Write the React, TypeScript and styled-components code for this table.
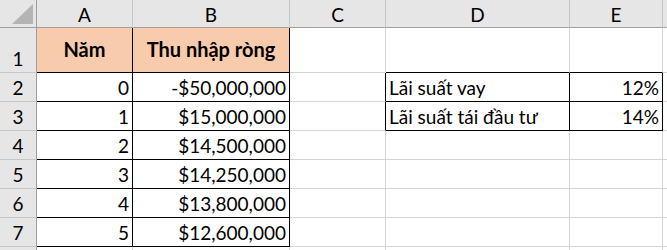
import React from 'react';
import styled, { createGlobalStyle } from 'styled-components';

const GRID = '#d4d4d4';
const BLACK = '#000000';

const Global = createGlobalStyle`
  body {
    margin: 0;
    background: #ffffff;
    overflow: hidden;
  }
`;

const Sheet = styled.div`
  display: grid;
  grid-template-columns: 37px 96px 157px 96px 184px 93px 4px;
  grid-template-rows: 28px 45px repeat(6, 29px) 10px;
  width: 667px;
  height: 250px;
  overflow: hidden;
  font-family: Lato, 'Liberation Sans', sans-serif;
  font-size: 19px;
  color: #000;
`;

const Corner = styled.div`
  background: #e6e6e6;
  border-right: 1px solid #9e9e9e;
  border-bottom: 1px solid #9e9e9e;
  position: relative;
  svg {
    position: absolute;
    right: 3px;
    bottom: 3px;
  }
`;

const ColHead = styled.div<{ $last?: boolean }>`
  background: #e6e6e6;
  border-right: 1px solid ${(p) => (p.$last ? '#e6e6e6' : '#c6c6c6')};
  border-bottom: 1px solid #9e9e9e;
  display: flex;
  align-items: center;
  justify-content: center;
  padding-top: 1px;
`;

const RowHead = styled.div`
  background: #e6e6e6;
  border-right: 1px solid #9e9e9e;
  border-bottom: 1px solid #c6c6c6;
  display: flex;
  align-items: flex-end;
  justify-content: center;
  padding-bottom: 2px;
  box-sizing: border-box;
`;

const Cell = styled.div<{
  $right: string;
  $bottom: string;
  $fill?: string;
  $align: 'left' | 'right' | 'center';
  $bold?: boolean;
  $middle?: boolean;
}>`
  background: ${(p) => p.$fill || '#ffffff'};
  border-right: 1px solid ${(p) => p.$right};
  border-bottom: 1px solid ${(p) => p.$bottom};
  display: flex;
  align-items: ${(p) => (p.$middle ? 'center' : 'flex-end')};
  justify-content: ${(p) =>
    p.$align === 'left' ? 'flex-start' : p.$align === 'right' ? 'flex-end' : 'center'};
  padding: 0 3px 2px 3px;
  font-weight: ${(p) => (p.$bold ? 700 : 400)};
  font-size: ${(p) => (p.$bold ? '20px' : '19px')};
  white-space: nowrap;
  overflow: visible;
  box-sizing: border-box;
`;

type CellData = {
  text?: string;
  align?: 'left' | 'right' | 'center';
  bold?: boolean;
  fill?: string;
  middle?: boolean;
};

const cols = ['A', 'B', 'C', 'D', 'E'];
const PEACH = '#f8cbad';

const money = ['-$50,000,000', '$15,000,000', '$14,500,000', '$14,250,000', '$13,800,000', '$12,600,000'];

// rows 1..8, columns A..E and a sliver of F
const rows: CellData[][] = [
  [
    { text: 'Năm', align: 'center', bold: true, fill: PEACH, middle: true },
    { text: 'Thu nhập ròng', align: 'center', bold: true, fill: PEACH, middle: true },
    {},
    {},
    {},
    {},
  ],
  ...money.map((m, i) => {
    const r: CellData[] = [
      { text: String(i), align: 'right' },
      { text: m, align: 'right' },
      {},
      {},
      {},
      {},
    ];
    if (i === 0) {
      r[3] = { text: 'Lãi suất vay', align: 'left' };
      r[4] = { text: '12%', align: 'right' };
    }
    if (i === 1) {
      r[3] = { text: 'Lãi suất tái đầu tư', align: 'left' };
      r[4] = { text: '14%', align: 'right' };
    }
    return r;
  }),
  [{}, {}, {}, {}, {}, {}],
];

// bordered ranges: [rowStart,rowEnd,colStart,colEnd] (0-based in rows/cols arrays)
const boxes = [
  [0, 6, 0, 1],
  [1, 2, 3, 4],
];

const inBox = (r: number, c: number) =>
  boxes.some(([r0, r1, c0, c1]) => r >= r0 && r <= r1 && c >= c0 && c <= c1);

export default function App() {
  return (
    <>
      <Global />
      <Sheet>
        <Corner>
          <svg width="21" height="20" viewBox="0 0 21 20">
            <polygon points="21,0 21,20 0,20" fill="#b4b4b4" />
          </svg>
        </Corner>
        {cols.map((c) => (
          <ColHead key={c}>{c}</ColHead>
        ))}
        <ColHead $last />
        {rows.map((row, r) => (
          <React.Fragment key={r}>
            <RowHead>{r < 7 ? r + 1 : ''}</RowHead>
            {row.map((cell, c) => {
              const right = inBox(r, c) || inBox(r, c + 1) ? BLACK : GRID;
              const bottom = inBox(r, c) || inBox(r + 1, c) ? BLACK : GRID;
              return (
                <Cell
                  key={c}
                  $right={c === 5 ? '#ffffff' : right}
                  $bottom={bottom}
                  $fill={cell.fill}
                  $align={cell.align || 'left'}
                  $bold={cell.bold}
                  $middle={cell.middle}
                >
                  {cell.text}
                </Cell>
              );
            })}
          </React.Fragment>
        ))}
      </Sheet>
    </>
  );
}
